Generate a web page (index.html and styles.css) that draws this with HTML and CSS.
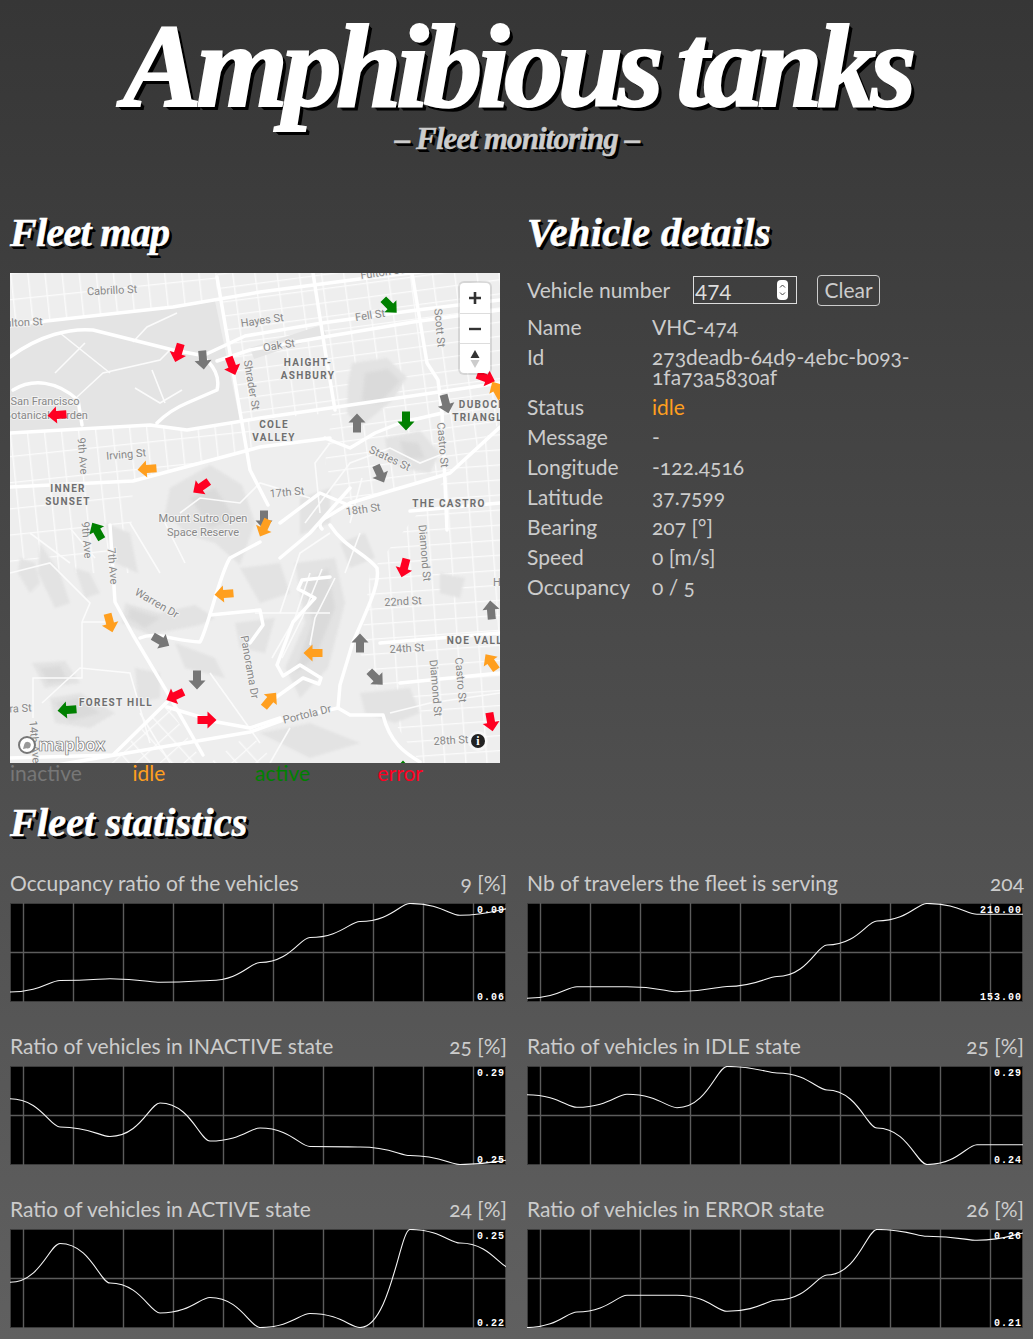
FILE: index.html
```html
<!DOCTYPE html>
<html lang="en">
<head>
<meta charset="utf-8">
<title>Amphibious tanks</title>
<link rel="stylesheet" href="styles.css">
</head>
<body>
<svg class="defs" width="0" height="0" aria-hidden="true">
  <defs>
    <path id="arrow" d="M0-9.5 8.5-.5H4V9.500H-4V-.5H-8.5Z"/>
    <pattern id="west" width="17" height="26" patternUnits="userSpaceOnUse" patternTransform="rotate(-6)">
      <path d="M0 .7H17M.7 0V26" class="pat"/>
    </pattern>
    <pattern id="east" width="22" height="14" patternUnits="userSpaceOnUse" patternTransform="rotate(-7.5)">
      <path d="M0 .7H22M.7 0V14" class="pat"/>
    </pattern>
    <pattern id="noe" width="21" height="15" patternUnits="userSpaceOnUse" patternTransform="rotate(-4)">
      <path d="M0 .7H21M.7 0V15" class="pat"/>
    </pattern>
    <pattern id="diag" width="16" height="16" patternUnits="userSpaceOnUse" patternTransform="rotate(-42)">
      <path d="M0 .7H16M.7 0V16" class="pat"/>
    </pattern>
    <symbol id="grid" viewBox="0 0 496 99">
      <path d="M0 .5H496M0 98.500H496M.5 0V99M495.5 0V99" class="gridframe"/>
      <path d="M13.5 0V99M63.5 0V99M113.500 0V99M163.5 0V99M213.5 0V99M263.5 0V99M313.5 0V99M363.5 0V99M413.5 0V99M463.5 0V99M0 49.500H496" class="gridline"/>
    </symbol>
  </defs>
</svg>

<header class="masthead">
  <h1 class="title">Amphibious tanks</h1>
  <p class="subtitle">– Fleet monitoring –</p>
</header>

<main class="columns">
  <section class="panel">
    <h2 class="heading heading-map">Fleet map</h2>
    <div class="map">
      <svg class="map-art" viewBox="0 0 490 490" width="490" height="490" role="img" aria-label="Map of San Francisco with vehicle arrows">
        <rect width="490" height="490" class="land"/>
        <path d="M0 0H207V28L0 52Z" fill="url(#west)"/>
        <path d="M0 160 240 147 250 172 123 208 120 300 60 300 0 290Z" fill="url(#west)"/>
        <path d="M207 0H490V150L440 200 380 217 330 230 315 190 322 140 230 148Z" fill="url(#east)"/>
        <path d="M360 300 440 200 490 150V490H410L385 450 350 380Z" fill="url(#noe)"/>
        <path d="M100 490 157 430 193 490Z" fill="url(#diag)"/>
        <path d="M200 490 240 460 265 490Z" fill="url(#diag)"/>
        <path d="M0 52 163 35 205 28 230 148 177 157 140 152 0 160Z" class="park"/>
        <path d="M240 75 312 52 316 62 244 86Z" class="park"/>
        <g class="hill">
          <path d="M342 90 377 85 397 104 383 127 350 154 337 140 338 110Z"/>
          <path d="M375 165 410 158 430 180 420 200 395 196 378 185Z"/>
          <path d="M160 215 200 192 232 212 245 250 230 292 205 270 178 262 155 240Z"/>
          <path d="M115 330 150 340 185 332 205 345 190 352 140 362 112 350Z"/>
          <path d="M285 290 325 285 335 330 318 395 290 425 275 395 295 350Z"/>
          <path d="M10 285 25 290 30 310 20 320 8 300Z"/>
          <path d="M30 270 50 300 60 330 45 335 28 300Z"/>
          <path d="M65 295 80 300 90 320 75 325Z"/>
          <path d="M40 425 70 420 105 440 80 455 45 450Z"/>
          <path d="M22 390 55 388 70 410 35 415Z"/>
          <path d="M350 420 400 415 410 440 385 450 355 440Z"/>
          <path d="M125 395 150 400 150 425 128 430Z"/>
          <path d="M225 350 265 345 255 380 230 375Z"/>
          <path d="M95 250 120 260 128 300 105 290Z"/>
          <path d="M230 295 270 290 280 320 250 330Z"/>
          <path d="M165 370 205 385 215 405 175 395Z"/>
          <path d="M330 270 355 260 365 285 340 295Z"/>
          <path d="M290 225 320 215 320 250 290 262Z"/>
          <path d="M430 300 455 305 450 325 430 320Z"/>
          <path d="M250 460 300 450 350 470 300 485Z"/>
        </g>
        <g class="hill-dark">
          <path d="M355 100 378 96 390 108 370 130 352 128Z"/>
          <path d="M390 168 408 170 415 185 395 186Z"/>
          <path d="M180 225 205 215 225 245 200 255Z"/>
          <path d="M295 310 318 295 325 335 305 385 285 400 302 350Z"/>
          <path d="M120 335 150 345 135 355 118 345Z"/>
          <path d="M45 430 68 425 90 440 60 448Z"/>
          <path d="M30 395 50 393 58 408 38 410Z"/>
        </g>
        <g class="road-sm">
          <path d="M67 124 93 100 150 87 160 77"/>
          <path d="M123 69 137 54 167 40"/>
          <path d="M100 100 50 60M45 100 75 70"/>
          <path d="M125 115 150 130 172 117M142 97 155 130"/>
          <path d="M170 240 190 225 230 230 250 210 300 225"/>
          <path d="M0 300 40 290 80 330 72 349"/>
          <path d="M72 349H100M72 349V405H23V445"/>
          <path d="M32 430 70 395 120 400 140 470"/>
          <path d="M320 260 290 280 270 340"/>
          <path d="M380 440 420 430 490 420"/>
          <path d="M280 455 260 490"/>
          <path d="M320 170 305 190 310 240M295 250 340 190 380 175 410 190 430 182"/>
          <path d="M245 340 320 340M200 400 250 470M130 440 160 490"/>
          <path d="M300 300 285 345 262 385M312 296 292 345 272 385M325 305 305 345 300 372"/>
          <path d="M60 255 85 285M20 260 60 290M120 250 150 300M150 240 175 290"/>
          <path d="M350 260 335 300M352 205 340 250"/>
        </g>
        <g class="road">
          <path d="M0 52 163 34 250 19 357 5 490-10"/>
          <path d="M0 160 140 152 177 157 250 145 320 135 490 110"/>
          <path d="M207 4 240 197 258 232"/>
          <path d="M0 84C30 62 60 55 83 57L163 77 190 82C205 92 210 105 207 117L177 130C165 135 155 142 147 150"/>
          <path d="M3 117C23 105 47 108 68 127L72 152"/>
          <path d="M190 84 235 63 312 50 407 37 490 27"/>
          <path d="M207 88 240 77 320 63 403 49 490 37"/>
          <path d="M303 0 315 77 325 137"/>
          <path d="M402 0 417 90 428 107 432 140 437 257"/>
          <path d="M0 214 123 208 250 174 320 165"/>
          <path d="M490 154 440 200 407 210 383 217 340 230 317 244C310 248 308 252 312 256"/>
          <path d="M320 252C335 275 355 280 367 295 370 310 360 330 343 369L330 412 328 435"/>
          <path d="M0 500 240 459 273 447 328 435"/>
          <path d="M328 435 340 442 373 442C380 470 395 480 410 489"/>
          <path d="M100 252 105 329 123 362 157 419 193 482"/>
          <path d="M157 429 103 482 0 485"/>
          <path d="M157 434 207 449 240 455 270 445"/>
          <path d="M130 365C145 358 165 368 190 369 198 355 210 300 220 285L250 269"/>
          <path d="M200 342 250 337 253 352 240 370"/>
          <path d="M270 250 310 220 345 235"/>
          <path d="M320 304 292 307 288 316 305 325 283 349 267 392 273 403 290 392 311 405 309 411 293 405 265 425"/>
          <path d="M340 215 300 260 270 285"/>
          <path d="M315 165 340 175 365 160 390 150 432 140"/>
          <path d="M400 238 490 230"/>
          <path d="M370 370 490 360M390 410 490 400"/>
        </g>
        <g class="st">
          <text x="102" y="21" transform="rotate(-3 102 17)">Cabrillo St</text>
          <text x="11" y="53" transform="rotate(-3 13 49)">Fulton St</text>
          <text x="252" y="51" transform="rotate(-8 252 47)">Hayes St</text>
          <text x="360" y="46" transform="rotate(-9 360 42)">Fell St</text>
          <text x="269" y="76" transform="rotate(-9 269 72)">Oak St</text>
          <text x="372" y="3" transform="rotate(-8 372 0)">Fulton St</text>
          <text x="242" y="116" transform="rotate(80 242 112)">Shrader St</text>
          <text x="430" y="59" transform="rotate(85 430 55)">Scott St</text>
          <text x="380" y="189" transform="rotate(25 380 185)">States St</text>
          <text x="433" y="176" transform="rotate(85 433 172)">Castro St</text>
          <text x="277" y="223" transform="rotate(-5 277 219)">17th St</text>
          <text x="353" y="240" transform="rotate(-8 353 236)">18th St</text>
          <text x="35" y="132">San Francisco</text>
          <text x="36" y="146">Botanical Garden</text>
          <text x="116" y="185" transform="rotate(-5 116 181)">Irving St</text>
          <text x="73" y="187" transform="rotate(85 73 183)">9th Ave</text>
          <text x="193" y="249">Mount Sutro Open</text>
          <text x="193" y="263">Space Reserve</text>
          <text x="77" y="271" transform="rotate(85 77 267)">9th Ave</text>
          <text x="103" y="297" transform="rotate(85 103 293)">7th Ave</text>
          <text x="147" y="334" transform="rotate(30 147 330)">Warren Dr</text>
          <text x="240" y="398" transform="rotate(80 240 394)">Panorama Dr</text>
          <text x="1" y="439" transform="rotate(-3 10 435)">Sierra St</text>
          <text x="25" y="473" transform="rotate(85 25 469)">14th Ave</text>
          <text x="393" y="332" transform="rotate(-3 393 328)">22nd St</text>
          <text x="397" y="379" transform="rotate(-3 397 375)">24th St</text>
          <text x="415" y="284" transform="rotate(85 415 280)">Diamond St</text>
          <text x="426" y="419" transform="rotate(85 426 415)">Diamond St</text>
          <text x="451" y="411" transform="rotate(85 451 407)">Castro St</text>
          <text x="297" y="445" transform="rotate(-14 297 441)">Portola Dr</text>
          <text x="441" y="471" transform="rotate(-3 441 467)">28th St</text>
          <text x="487" y="313">H</text>
        </g>
        <g class="nb">
          <text x="298" y="93">HAIGHT-</text>
          <text x="298" y="106">ASHBURY</text>
          <text x="264" y="155">COLE</text>
          <text x="264" y="168">VALLEY</text>
          <text x="472" y="135">DUBOCE</text>
          <text x="471" y="148">TRIANGLE</text>
          <text x="439" y="234">THE CASTRO</text>
          <text x="58" y="219">INNER</text>
          <text x="58" y="232">SUNSET</text>
          <text x="106" y="433">FOREST HILL</text>
          <text x="472" y="371">NOE VALLEY</text>
        </g>
        <g class="ar-red">
          <use href="#arrow" transform="translate(168 80) rotate(197)"/>
          <use href="#arrow" transform="translate(222 93) rotate(160)"/>
          <use href="#arrow" transform="translate(47 142) rotate(265)"/>
          <use href="#arrow" transform="translate(191 214) rotate(235)"/>
          <use href="#arrow" transform="translate(476 105) rotate(110)"/>
          <use href="#arrow" transform="translate(165 423) rotate(245)"/>
          <use href="#arrow" transform="translate(197 447) rotate(90)"/>
          <use href="#arrow" transform="translate(394 295) rotate(195)"/>
          <use href="#arrow" transform="translate(481 449) rotate(170)"/>
        </g>
        <g class="ar-gray">
          <use href="#arrow" transform="translate(193 87) rotate(175)"/>
          <use href="#arrow" transform="translate(436 131) rotate(165)"/>
          <use href="#arrow" transform="translate(347 150)"/>
          <use href="#arrow" transform="translate(370 201) rotate(155)"/>
          <use href="#arrow" transform="translate(254 247) rotate(180)"/>
          <use href="#arrow" transform="translate(151 368) rotate(120)"/>
          <use href="#arrow" transform="translate(187 407) rotate(180)"/>
          <use href="#arrow" transform="translate(481 337) rotate(355)"/>
          <use href="#arrow" transform="translate(350 370)"/>
          <use href="#arrow" transform="translate(366 405) rotate(135)"/>
        </g>
        <g class="ar-orange">
          <use href="#arrow" transform="translate(137 196) rotate(265)"/>
          <use href="#arrow" transform="translate(487 117) rotate(330)"/>
          <use href="#arrow" transform="translate(254 255) rotate(205)"/>
          <use href="#arrow" transform="translate(100 350) rotate(165)"/>
          <use href="#arrow" transform="translate(214 321) rotate(265)"/>
          <use href="#arrow" transform="translate(481 389) rotate(325)"/>
          <use href="#arrow" transform="translate(303 380) rotate(270)"/>
          <use href="#arrow" transform="translate(260 427) rotate(40)"/>
        </g>
        <g class="ar-green">
          <use href="#arrow" transform="translate(87 258) rotate(330)"/>
          <use href="#arrow" transform="translate(380 33) rotate(135)"/>
          <use href="#arrow" transform="translate(396 148) rotate(180)"/>
          <use href="#arrow" transform="translate(57 437) rotate(265)"/>
          <use href="#arrow" transform="translate(393 497)"/>
        </g>
      </svg>
      <div class="map-controls">
        <button class="ctrl" type="button" aria-label="Zoom in"><svg width="12" height="12" viewBox="0 0 12 12"><path d="M4.700 0h2.600v4.700H12v2.600H7.300V12H4.700V7.300H0V4.700h4.700z"/></svg></button>
        <button class="ctrl" type="button" aria-label="Zoom out"><svg width="12" height="12" viewBox="0 0 12 12"><path d="M0 4.800h12v2.400H0z"/></svg></button>
        <button class="ctrl" type="button" aria-label="Compass"><svg width="10" height="18" viewBox="0 0 10 18"><path d="M5 0l4.500 8H.5z"/><path class="faded" d="M5 18l4.500-8H.5z"/></svg></button>
      </div>
      <div class="mapbox-logo">
        <svg width="20" height="20" viewBox="0 0 20 20"><circle cx="10" cy="10" r="8" class="logo-ring"/><path d="M6 14l1.200-4.500a3.300 3.300 0 1 1 2.300 3.800z" class="logo-mark"/></svg>
        <span class="mapbox-word">mapbox</span>
      </div>
      <div class="map-info"><span>i</span></div>
    </div>
    <div class="legend">
      <span class="inactive">inactive</span>
      <span class="idle">idle</span>
      <span class="active">active</span>
      <span class="error">error</span>
    </div>
  </section>

  <section class="panel">
    <h2 class="heading heading-details">Vehicle details</h2>
    <form class="picker">
      <label class="picker-label" for="vn">Vehicle number</label>
      <div class="number-input">
        <span id="vn" class="number-value">474</span>
        <span class="spinner"><svg width="7" height="14" viewBox="0 0 7 14"><path d="M1 4.500 3.500 2 6 4.500M1 9.500 3.500 12 6 9.500"/></svg></span>
      </div>
      <button class="clear" type="button">Clear</button>
    </form>
    <dl class="details">
      <dt>Name</dt><dd>VHC-474</dd>
      <dt>Id</dt><dd>273deadb-64d9-4ebc-b093-<br>1fa73a5830af</dd>
      <dt>Status</dt><dd class="idle">idle</dd>
      <dt>Message</dt><dd>-</dd>
      <dt>Longitude</dt><dd>-122.4516</dd>
      <dt>Latitude</dt><dd>37.7599</dd>
      <dt>Bearing</dt><dd>207 [°]</dd>
      <dt>Speed</dt><dd>0 [m/s]</dd>
      <dt>Occupancy</dt><dd>0 / 5</dd>
    </dl>
  </section>
</main>

<section class="stats">
  <h2 class="heading heading-stats">Fleet statistics</h2>
  <div class="stat-grid">
    <article class="stat">
      <div class="stat-head"><span>Occupancy ratio of the vehicles</span><span>9 [%]</span></div>
      <svg class="chart" viewBox="0 0 496 99" width="496" height="99">
        <use href="#grid" width="496" height="99"/>
        <path class="curve" d="M0 89C30 89 40 77.500 50 77.500C80 77.500 90 75.700 100 75.700C130 75.700 140 79.300 150 79.300C180 79.300 190 77.500 200 77.500C230 77.500 240 59.500 250 59.500C280 59.500 290 34.500 300 34.500C330 34.500 340 18.500 350 18.500C380 18.500 390 .5 400 .5C430 .5 440 12.300 450 12.300C480 12.300 490 5.500 500 5.500"/>
        <text class="tick" x="495" y="10">0.09</text><text class="tick" x="495" y="97">0.06</text>
      </svg>
    </article>
    <article class="stat">
      <div class="stat-head"><span>Nb of travelers the fleet is serving</span><span>204</span></div>
      <svg class="chart" viewBox="0 0 496 99" width="496" height="99">
        <use href="#grid" width="496" height="99"/>
        <path class="curve" d="M0 95.300C30 95.300 40 83.700 50 83.700C80 83.700 90 83.700 100 83.700C130 83.700 140 88.700 150 88.700C180 88.700 190 83.500 200 83.500C230 83.500 240 73.500 250 73.500C280 73.500 290 42 300 42C330 42 340 18 350 18C380 18 390 .5 400 .5C430 .5 440 11.300 450 11.300C480 11.300 490 11.300 500 11.300"/>
        <text class="tick" x="495" y="10">210.00</text><text class="tick" x="495" y="97">153.00</text>
      </svg>
    </article>
    <article class="stat">
      <div class="stat-head"><span>Ratio of vehicles in INACTIVE state</span><span>25 [%]</span></div>
      <svg class="chart" viewBox="0 0 496 99" width="496" height="99">
        <use href="#grid" width="496" height="99"/>
        <path class="curve" d="M0 32.700C30 32.700 40 61 50 61C80 61 90 70.500 100 70.500C130 70.500 140 37 150 37C180 37 190 75 200 75C230 75 240 62 250 62C280 62 290 80.500 300 80.500C330 80.500 340 81 350 81C380 81 390 89.500 400 89.500C430 89.500 440 98.500 450 98.500C480 98.500 490 94 500 94"/>
        <text class="tick" x="495" y="10">0.29</text><text class="tick" x="495" y="97">0.25</text>
      </svg>
    </article>
    <article class="stat">
      <div class="stat-head"><span>Ratio of vehicles in IDLE state</span><span>25 [%]</span></div>
      <svg class="chart" viewBox="0 0 496 99" width="496" height="99">
        <use href="#grid" width="496" height="99"/>
        <path class="curve" d="M0 28.700C30 28.700 40 41.300 50 41.300C80 41.300 90 28.300 100 28.300C130 28.300 140 41.700 150 41.700C180 41.700 190 .5 200 .5C230 .5 240 7 250 7C280 7 290 24 300 24C330 24 340 62 350 62C380 62 390 98.500 400 98.500C430 98.500 440 78.700 450 78.700C480 78.700 490 78.700 500 78.700"/>
        <text class="tick" x="495" y="10">0.29</text><text class="tick" x="495" y="97">0.24</text>
      </svg>
    </article>
    <article class="stat">
      <div class="stat-head"><span>Ratio of vehicles in ACTIVE state</span><span>24 [%]</span></div>
      <svg class="chart" viewBox="0 0 496 99" width="496" height="99">
        <use href="#grid" width="496" height="99"/>
        <path class="curve" d="M0 53.300C30 53.300 40 14.500 50 14.500C80 14.500 90 54 100 54C130 54 140 84 150 84C180 84 190 68.500 200 68.500C230 68.500 240 98.500 250 98.500C280 98.500 290 84.500 300 84.500C330 84.500 340 98.500 350 98.500C380 98.500 390 .5 400 .5C430 .5 440 14 450 14C480 14 490 39 500 39"/>
        <text class="tick" x="495" y="10">0.25</text><text class="tick" x="495" y="97">0.22</text>
      </svg>
    </article>
    <article class="stat">
      <div class="stat-head"><span>Ratio of vehicles in ERROR state</span><span>26 [%]</span></div>
      <svg class="chart" viewBox="0 0 496 99" width="496" height="99">
        <use href="#grid" width="496" height="99"/>
        <path class="curve" d="M0 98.500C30 98.500 40 83 50 83C80 83 90 66.300 100 66.300C130 66.300 140 66.300 150 66.300C180 66.300 190 82.300 200 82.300C230 82.300 240 71 250 71C280 71 290 46 300 46C330 46 340 .5 350 .5C380 .5 390 7.300 400 7.300C430 7.300 440 11.300 450 11.300C480 11.300 490 3.500 500 3.500"/>
        <text class="tick" x="495" y="10">0.26</text><text class="tick" x="495" y="97">0.21</text>
      </svg>
    </article>
  </div>
</section>
</body>
</html>
```

FILE: styles.css
```css
* { box-sizing: border-box; }
html { height: 100%; }
body {
  margin: 0;
  height: 1339px;
  overflow: hidden;
  padding: 0 9px 0 10px;
  background: linear-gradient(#363636, #606060);
  color: #ccc;
  font-family: "Lato", "Open Sans", sans-serif;
  font-size: 21px;
  line-height: 20px;
  font-variant-numeric: oldstyle-nums;
}
.defs { position: absolute; }

.masthead { text-align: center; padding-top: 12px; height: 190px; }
.title, .subtitle, .heading {
  font-family: "Liberation Serif", serif;
  font-weight: bold;
  font-style: italic;
  margin: 0;
}
.title {
  color: #fff;
  font-size: 118px;
  line-height: 110px;
  letter-spacing: -5.5px;
  word-spacing: -6px;
  -webkit-text-stroke: 2px #fff;
  text-shadow: 1px 1px 0 #000, 2px 2px 0 #000, 3px 3px 0 #000, 4px 4px 0 #000;
}
.subtitle {
  color: #ccc;
  font-size: 31px;
  line-height: 30px;
  margin-top: 2px;
  letter-spacing: -.9px;
  -webkit-text-stroke: .5px #ccc;
  text-shadow: 1px 1px 0 #000, 2px 2px 0 #000, 3px 3px 0 #000;
}
.heading {
  color: #fff;
  font-size: 40px;
  line-height: 44px;
  -webkit-text-stroke: .6px #fff;
  text-shadow: 1px 1px 0 #000, 2px 2px 0 #000, 3px 3px 0 #000;
}
.heading-map { letter-spacing: -.7px; }
.heading-details { letter-spacing: .5px; }
.heading-stats { letter-spacing: .2px; }

.columns { display: grid; grid-template-columns: 497px 497px; column-gap: 20px; }
.panel .heading { height: 83px; padding-top: 21px; }

.map { position: relative; width: 490px; height: 490px; overflow: hidden; }
.map-art { display: block; }
.land { fill: #eee; }
.pat { stroke: #fbfbfb; stroke-width: 1.3; fill: none; }
.park { fill: #e4e4e4; }
.hill { fill: #e3e3e3; filter: blur(1px); }
.hill-dark { fill: #dadada; filter: blur(1.500px); }
.road { fill: none; stroke: #fff; stroke-width: 3.5; stroke-linejoin: round; stroke-linecap: round; }
.road-sm { fill: none; stroke: #fbfbfb; stroke-width: 1.6; }
.st, .nb { font-family: "Roboto", "Liberation Sans", sans-serif; text-anchor: middle; paint-order: stroke; stroke: #f2f2f2; stroke-width: 2px; font-variant-numeric: lining-nums; }
.st { font-size: 11px; fill: #888; }
.nb { font-size: 10px; font-weight: bold; fill: #6f6f6f; letter-spacing: 1.300px; }
.ar-red { fill: #ff0022; }
.ar-gray { fill: #777; }
.ar-orange { fill: #ff9f1f; }
.ar-green { fill: #008000; }

.map-controls {
  position: absolute;
  top: 10px;
  right: 10px;
  width: 30px;
  display: flex;
  flex-direction: column;
  background: #fff;
  border-radius: 4px;
  box-shadow: 0 0 0 2px rgba(0,0,0,.1);
}
.ctrl {
  height: 30px;
  padding: 0;
  border: 0;
  border-top: 1px solid #ddd;
  background: none;
  display: flex;
  align-items: center;
  justify-content: center;
}
.ctrl:first-child { border-top: 0; }
.ctrl svg { fill: #333; }
.ctrl .faded { fill: #ccc; }

.mapbox-logo { position: absolute; left: 7px; bottom: 8px; display: flex; align-items: center; gap: 1px; }
.logo-ring { fill: #fff; stroke: #777; stroke-width: 2; }
.logo-mark { fill: #999; }
.mapbox-word {
  font-family: "Open Sans", sans-serif;
  font-size: 17px;
  font-weight: 700;
  line-height: 18px;
  color: #fff;
  letter-spacing: -.3px;
  -webkit-text-stroke: .7px #777;
}
.map-info {
  position: absolute;
  right: 15px;
  bottom: 15px;
  width: 14px;
  height: 14px;
  border-radius: 50%;
  background: #222;
  box-shadow: 0 0 0 3px rgba(255,255,255,.5);
  color: #fff;
  font: bold 12px/14px "Liberation Serif", serif;
  text-align: center;
}

.legend { display: grid; grid-template-columns: repeat(4, 122.500px); height: 20px; line-height: 20px; }
.inactive { color: #777; }
.idle { color: #ff9f1f; }
.active { color: #008000; }
.error { color: #ff0022; }

.picker { display: flex; align-items: center; height: 30px; margin-top: 2px; margin-bottom: 12px; }
.picker-label { width: 166px; }
.number-input {
  width: 104px;
  height: 28px;
  border: 1px solid #ddd;
  display: flex;
  align-items: center;
  justify-content: space-between;
  padding: 0 8px 0 1px;
  margin-right: 20px;
}
.number-value { color: #ddd; padding-top: 3px; font-variant-numeric: lining-nums; }
.spinner { width: 11px; height: 20px; background: #fff; border-radius: 4px; display: flex; align-items: center; justify-content: center; }
.spinner path { fill: none; stroke: #444; stroke-width: 1; }
.clear {
  width: 63px;
  height: 31px;
  padding: 0;
  background: none;
  border: 1px solid #ccc;
  border-radius: 4px;
  color: #ccc;
  font: inherit;
}
.details { display: grid; grid-template-columns: 125px 1fr; row-gap: 10px; margin: 0; }
.details dt, .details dd { margin: 0; }
.details dd.idle { color: #ff9f1f; }

.stats .heading { height: 90px; padding-top: 18px; }
.stat-grid { display: grid; grid-template-columns: 497px 497px; column-gap: 20px; row-gap: 34px; }
.stat-head { display: flex; justify-content: space-between; height: 20px; margin-bottom: 10px; }
.chart { display: block; background: #000; }
.gridline { stroke: #5c5c5c; stroke-width: 1.4; fill: none; }
.gridframe { stroke: #3c3c3c; stroke-width: 1; fill: none; }
.curve { fill: none; stroke: #f4f4f4; stroke-width: 1.1; }
.tick {
  font-family: "Liberation Mono", "DejaVu Sans Mono", monospace;
  font-size: 10px;
  font-weight: bold;
  fill: #fff;
  text-anchor: end;
  letter-spacing: 1px;
}
```
